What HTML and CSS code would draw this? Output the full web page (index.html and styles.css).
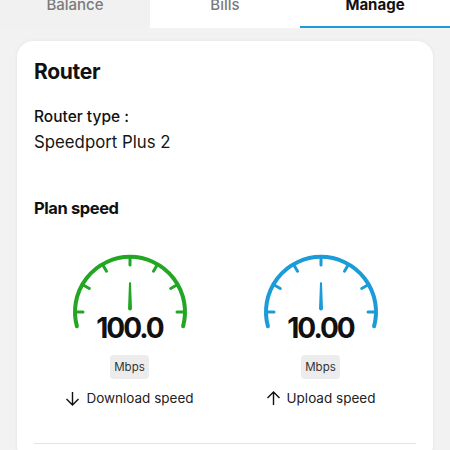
FILE: index.html
```html
<!DOCTYPE html>
<html>
<head>
<meta charset="utf-8">
<link rel="stylesheet" href="styles.css">
</head>
<body>
<div class="tabs">
  <div class="tab tab-grey">Balance</div>
  <div class="tab">Bills</div>
  <div class="tab tab-active">Manage</div>
</div>
<div class="card">
  <h1 class="title">Router</h1>
  <div class="label">Router type :</div>
  <div class="value">Speedport Plus 2</div>
  <h2 class="subtitle">Plan speed</h2>
  <div class="gauges">
    <div class="gauge gauge-green">
      <svg class="dial" width="120" height="78" viewBox="0 0 120 78">
        <path d="M6.9,74.2 A55,55 0 1 1 113.1,74.2" fill="none" stroke="currentColor" stroke-width="4" stroke-linecap="round"/>
        <g stroke="currentColor" stroke-width="3" stroke-linecap="round">
          <line x1="6" y1="60" x2="13" y2="60"/>
          <line x1="13.2" y1="33" x2="19.3" y2="36.5"/>
          <line x1="33" y1="13.2" x2="36.5" y2="19.3"/>
          <line x1="60" y1="6" x2="60" y2="13"/>
          <line x1="87" y1="13.2" x2="83.5" y2="19.3"/>
          <line x1="106.8" y1="33" x2="100.7" y2="36.5"/>
          <line x1="114" y1="60" x2="107" y2="60"/>
        </g>
        <path d="M58,57 L59,31 Q60,29 61,31 L62,57 Q60,60 58,57 Z" fill="currentColor"/>
      </svg>
      <div class="num">100.0</div>
      <div class="unit">Mbps</div>
      <div class="cap">
        <svg width="15" height="15" viewBox="0 0 15 15"><path d="M7.5,1 V14 M1.5,8 L7.5,14 L13.5,8" fill="none" stroke="#111" stroke-width="1.4"/></svg>
        <span>Download speed</span>
      </div>
    </div>
    <div class="gauge gauge-blue">
      <svg class="dial" width="120" height="78" viewBox="0 0 120 78">
        <path d="M6.9,74.2 A55,55 0 1 1 113.1,74.2" fill="none" stroke="currentColor" stroke-width="4" stroke-linecap="round"/>
        <g stroke="currentColor" stroke-width="3" stroke-linecap="round">
          <line x1="6" y1="60" x2="13" y2="60"/>
          <line x1="13.2" y1="33" x2="19.3" y2="36.5"/>
          <line x1="33" y1="13.2" x2="36.5" y2="19.3"/>
          <line x1="60" y1="6" x2="60" y2="13"/>
          <line x1="87" y1="13.2" x2="83.5" y2="19.3"/>
          <line x1="106.8" y1="33" x2="100.7" y2="36.5"/>
          <line x1="114" y1="60" x2="107" y2="60"/>
        </g>
        <path d="M58,57 L59,31 Q60,29 61,31 L62,57 Q60,60 58,57 Z" fill="currentColor"/>
      </svg>
      <div class="num">10.00</div>
      <div class="unit">Mbps</div>
      <div class="cap">
        <svg width="15" height="15" viewBox="0 0 15 15"><path d="M7.5,14 V1 M1.5,7 L7.5,1 L13.5,7" fill="none" stroke="#111" stroke-width="1.4"/></svg>
        <span>Upload speed</span>
      </div>
    </div>
  </div>
  <div class="divider"></div>
</div>
</body>
</html>
```

FILE: styles.css
```css
html, body {
  margin: 0;
  padding: 0;
  background: #f2f2f2;
  font-family: Inter, "Noto Sans", sans-serif;
  color: #111;
  overflow: hidden;
  height: 450px;
}

.tabs {
  display: flex;
  margin-top: -14px;
  height: 42px;
}

.tab {
  flex: 1;
  background: #fff;
  text-align: center;
  font-size: 15px;
  line-height: 20px;
  padding-top: 9px;
  box-sizing: border-box;
  color: #7a7a7a;
  font-weight: 500;
}

.tab-grey {
  background: #f1f1f1;
}

.tab-active {
  color: #111;
  font-weight: 700;
  border-bottom: 2px solid #1b9bd7;
}

.card {
  margin: 13px 17px 0;
  background: #fff;
  border-radius: 16px;
  padding: 18px 17px 0;
  box-shadow: 0 0 4px rgba(0, 0, 0, 0.06);
  height: 420px;
  box-sizing: border-box;
}

.title {
  margin: 0;
  font-size: 21px;
  line-height: 26px;
  font-weight: 700;
  letter-spacing: -0.3px;
}

.label {
  margin-top: 22px;
  font-size: 15.5px;
  line-height: 20px;
  font-weight: 500;
}

.value {
  margin-top: 3px;
  font-size: 16.8px;
  line-height: 24px;
  font-weight: 400;
  color: #161616;
}

.subtitle {
  margin: 43px 0 0;
  font-size: 16.5px;
  line-height: 22px;
  font-weight: 700;
  letter-spacing: -0.4px;
}

.gauges {
  display: grid;
  grid-template-columns: 1fr 1fr;
  margin-top: 33px;
}

.gauge {
  display: flex;
  flex-direction: column;
  align-items: center;
}

.gauge-green { color: #22a623; }
.gauge-blue { color: #1b9bd7; }

.dial {
  display: block;
}

.num {
  margin-top: -16px;
  font-size: 28px;
  line-height: 28px;
  font-weight: 700;
  letter-spacing: -2px;
  color: #111;
}

.unit {
  margin-top: 13px;
  background: #ececec;
  border-radius: 4px;
  padding: 0 4px;
  font-size: 11.5px;
  line-height: 24px;
  color: #333;
}

.cap {
  margin-top: 9px;
  display: flex;
  align-items: center;
  gap: 6px;
  font-size: 13.5px;
  line-height: 20px;
  color: #222;
}

.cap svg {
  display: block;
}

.divider {
  margin-top: 35px;
  height: 1px;
  background: #e3e3e3;
}
```
